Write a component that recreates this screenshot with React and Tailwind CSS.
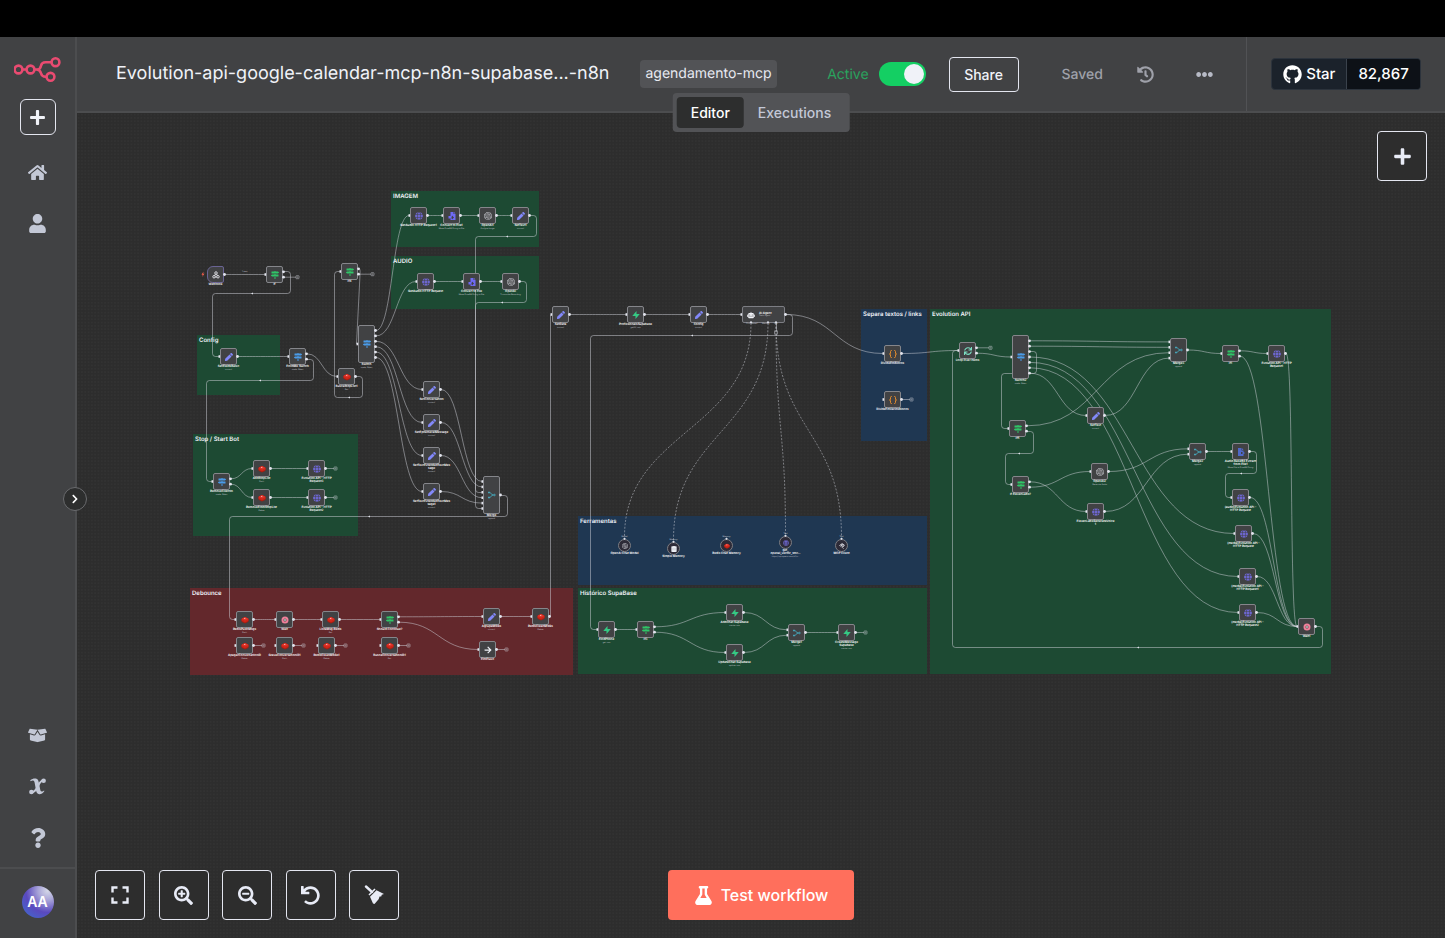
import { useState } from "react";
import {
  FaArrowRight, FaBoxOpen, FaChevronRight, FaEllipsisH, FaFlask, FaGithub, FaGlobe, FaHistory, FaHome,
  FaMapSigns, FaPen, FaPlus, FaQuestion, FaRobot, FaSearchMinus, FaSearchPlus, FaSync, FaUndo, FaUser,
} from "react-icons/fa";
import { SiOpenai } from "react-icons/si";

const NODE = 17;
const PORT_GAP = 5.4;

const STICKIES = [
  { title: "IMAGEM", x: 391, y: 191, w: 148, h: 56, color: "bg-[#1d4a33]" },
  { title: "AUDIO", x: 391, y: 256, w: 148, h: 53, color: "bg-[#1d4a33]" },
  { title: "Config", x: 197, y: 335, w: 83, h: 60, color: "bg-[#1d4a33]" },
  { title: "Stop / Start Bot", x: 193, y: 434, w: 165, h: 102, color: "bg-[#1d4a33]" },
  { title: "Debounce", x: 190, y: 588, w: 383, h: 87, color: "bg-[#63282c]" },
  { title: "Ferramentas", x: 578, y: 516, w: 349, h: 69, color: "bg-[#1f3752]" },
  { title: "Histórico SupaBase", x: 578, y: 588, w: 349, h: 86, color: "bg-[#1d4a33]" },
  { title: "Separa textos / links", x: 861, y: 309, w: 66, h: 132, color: "bg-[#1f3752]" },
  { title: "Evolution API", x: 930, y: 309, w: 401, h: 365, color: "bg-[#1d4a33]" },
];

// x / y are the top left corner of the node on the canvas
const NODES = {
  webhook: { x: 207, y: 266, icon: "webhook", label: "Webhook", ins: 0 },
  if: { x: 266, y: 266, icon: "if", label: "If", outs: 2, plus: 1 },
  if1: { x: 341, y: 263, icon: "if", label: "If4", outs: 2, plus: 1 },
  switch: { x: 358, y: 325, h: 38, icon: "switch", label: "Switch", sub: "mode: Rules", outs: 6 },
  setFields: { x: 220, y: 348, icon: "set", label: "SetFieldsBasic", sub: "manual" },
  fromMe: { x: 289, y: 348, icon: "switch", label: "FromMe Switch", sub: "mode: Rules", outs: 2 },
  stopList: { x: 338, y: 368, icon: "redis", label: "BuscaStopList1", sub: "Get" },

  imgHttp: { x: 410, y: 207, icon: "http", label: "GetAudio HTTP Request1" },
  imgFile: { x: 443, y: 207, icon: "file", label: "Convert to File1", sub: "Move Base64 String to File" },
  imgAi: { x: 479, y: 207, icon: "openai", label: "OpenAI1", sub: "Analyze Image" },
  imgSet: { x: 512, y: 207, icon: "set", label: "SetText1", sub: "manual" },
  audHttp: { x: 417, y: 273, icon: "http", label: "GetAudio HTTP Request" },
  audFile: { x: 463, y: 273, icon: "file", label: "Convert to File", sub: "Move Base64 String to File" },
  audAi: { x: 502, y: 273, icon: "openai", label: "OpenAI", sub: "Transcribe Recording" },

  setConv: { x: 423, y: 381, icon: "set", label: "SetConversation", sub: "manual" },
  setEph: { x: 423, y: 414, icon: "set", label: "SetEphemeralMessage", sub: "manual" },
  setExt: { x: 423, y: 447, icon: "set", label: "SetTextExtendedTextMes\nsage", sub: "manual" },
  setExt1: { x: 423, y: 483, icon: "set", label: "SetTextExtendedTextMes\nsage1", sub: "manual" },
  merge: { x: 483, y: 476, h: 38, icon: "merge", label: "Merge", sub: "append", ins: 6 },

  remove: { x: 213, y: 473, icon: "switch", label: "RemoveClientIn", sub: "mode: Rules", outs: 2 },
  addStop: { x: 253, y: 460, icon: "redis", label: "AddStopList", sub: "Push" },
  remStop: { x: 253, y: 489, icon: "redis", label: "RemoveFromStopList", sub: "Delete" },
  evoHttp3: { x: 308, y: 460, icon: "http", label: "Evolution API - HTTP\nRequest3", plus: 0 },
  evoHttp2: { x: 308, y: 489, icon: "http", label: "Evolution API - HTTP\nRequest2", plus: 0 },

  push: { x: 236, y: 611, icon: "redis", label: "RedisPushMsgs", sub: "Push" },
  wait: { x: 276, y: 611, icon: "wait", label: "Wait" },
  lista: { x: 322, y: 611, icon: "redis", label: "ListaMsg Redis", sub: "Get" },
  should: { x: 381, y: 611, icon: "if", label: "Should Continue?", outs: 2 },
  agrupa: { x: 483, y: 608, icon: "set", label: "AgrupaMSGs", sub: "manual" },
  clean: { x: 532, y: 608, icon: "redis", label: "RedisCleanMSGs", sub: "Delete" },
  apagar: { x: 236, y: 637, icon: "redis", label: "ApagarConversationID", sub: "Delete", plus: 0 },
  grava: { x: 276, y: 637, icon: "redis", label: "GravaConversationID1", sub: "Push", plus: 0 },
  clean1: { x: 318, y: 637, icon: "redis", label: "RedisCleanMSGs1", sub: "Delete", plus: 0 },
  busca: { x: 381, y: 637, icon: "redis", label: "BuscaConversationID1", sub: "Get", plus: 0 },
  noop: { x: 479, y: 641, icon: "arrow", label: "FimFluxo", plus: 0 },

  setData: { x: 552, y: 306, icon: "set", label: "SetData", sub: "manual" },
  profis: { x: 627, y: 306, icon: "supabase", label: "ProfissionaisSupabase", sub: "getAll: row" },
  config: { x: 690, y: 306, icon: "set", label: "Config", sub: "manual" },
  agent: { x: 742, y: 306, w: 43, icon: "agent" },
  divide: { x: 884, y: 345, icon: "code", label: "DivideEmBlocos" },
  divide2: { x: 884, y: 391, icon: "code", label: "DivideEmVariosBlocos", plus: 0 },

  find: { x: 598, y: 621, icon: "supabase", label: "FindPhone", sub: "get: row" },
  if3: { x: 637, y: 621, icon: "if", label: "If3", outs: 2 },
  addChat: { x: 726, y: 604, icon: "supabase", label: "AddChat Supabase", sub: "create: row" },
  updChat: { x: 726, y: 644, icon: "supabase", label: "UpdateChat Supabase", sub: "update: row" },
  merge1: { x: 788, y: 624, icon: "merge", label: "Merge1", sub: "append", ins: 2 },
  create: { x: 838, y: 624, icon: "supabase", label: "CreateMessage\nSupabase", sub: "create: row", plus: 0 },

  loop: { x: 959, y: 342, icon: "loop", label: "Loop Over Items", outs: 2, plus: 0 },
  switch2: { x: 1012, y: 335, h: 44, icon: "switch", label: "Switch2", sub: "mode: Rules", outs: 7 },
  if5: { x: 1009, y: 420, icon: "if", label: "If5", outs: 2 },
  ifEleven: { x: 1012, y: 476, icon: "if", label: "If ElevenLabs?", outs: 2 },
  setText: { x: 1087, y: 407, icon: "set", label: "SetText", sub: "manual" },
  openai2: { x: 1091, y: 463, icon: "openai", label: "OpenAI2", sub: "Generate Audio" },
  eleven: { x: 1087, y: 503, icon: "http", label: "ElevenLabsGenerateVoice\n1" },
  merge3: { x: 1170, y: 338, h: 24, icon: "merge", label: "Merge3", sub: "append", ins: 4 },
  merge2: { x: 1189, y: 443, icon: "merge", label: "Merge2", sub: "append", ins: 2 },
  audioEx: { x: 1232, y: 443, icon: "extract", label: "Audio Base64 Extract\nfrom File1", sub: "Move File to Base64 String" },
  sendAudio: { x: 1232, y: 489, icon: "http", label: "(audio)Evolution API -\nHTTP Request" },
  media1: { x: 1235, y: 525, icon: "http", label: "(media)Evolution API -\nHTTP Request" },
  media2: { x: 1239, y: 568, icon: "http", label: "(media)Evolution API -\nHTTP Request1" },
  media3: { x: 1239, y: 604, icon: "http", label: "(media)Evolution API -\nHTTP Request2" },
  if6: { x: 1222, y: 345, icon: "if", label: "If1", outs: 2 },
  evoHttp: { x: 1268, y: 345, icon: "http", label: "Evolution API - HTTP\nRequest1" },
  wait1: { x: 1298, y: 618, icon: "wait", label: "Wait1" },
};

// [source, source port, target, target port]
const EDGES = [
  ["webhook", 0, "if", 0], ["setFields", 0, "fromMe", 0], ["fromMe", 0, "stopList", 0],
  ["switch", 0, "imgHttp", 0], ["switch", 1, "audHttp", 0], ["switch", 2, "setConv", 0],
  ["switch", 3, "setEph", 0], ["switch", 4, "setExt", 0], ["switch", 5, "setExt1", 0],
  ["imgHttp", 0, "imgFile", 0], ["imgFile", 0, "imgAi", 0], ["imgAi", 0, "imgSet", 0],
  ["audHttp", 0, "audFile", 0], ["audFile", 0, "audAi", 0],
  ["setConv", 0, "merge", 0], ["setEph", 0, "merge", 1], ["setExt", 0, "merge", 3], ["setExt1", 0, "merge", 4],
  ["remove", 0, "addStop", 0], ["remove", 1, "remStop", 0],
  ["addStop", 0, "evoHttp3", 0], ["remStop", 0, "evoHttp2", 0],
  ["push", 0, "wait", 0], ["wait", 0, "lista", 0], ["lista", 0, "should", 0],
  ["should", 0, "agrupa", 0], ["should", 1, "noop", 0], ["agrupa", 0, "clean", 0],
  ["setData", 0, "profis", 0], ["profis", 0, "config", 0], ["config", 0, "agent", 0],
  ["agent", 0, "divide", 0], ["divide", 0, "loop", 0],
  ["find", 0, "if3", 0], ["if3", 0, "addChat", 0], ["if3", 1, "updChat", 0],
  ["addChat", 0, "merge1", 0], ["updChat", 0, "merge1", 1], ["merge1", 0, "create", 0],
  ["loop", 1, "switch2", 0], ["switch2", 0, "merge3", 0], ["switch2", 1, "merge3", 1],
  ["switch2", 3, "media1", 0], ["switch2", 4, "media2", 0], ["switch2", 5, "media3", 0], ["switch2", 6, "setText", 0],
  ["if5", 0, "merge3", 2], ["setText", 0, "merge3", 3], ["merge3", 0, "if6", 0], ["if6", 0, "evoHttp", 0],
  ["ifEleven", 0, "eleven", 0], ["ifEleven", 1, "openai2", 0],
  ["openai2", 0, "merge2", 0], ["eleven", 0, "merge2", 1], ["merge2", 0, "audioEx", 0],
  ["if6", 1, "wait1", 0], ["evoHttp", 0, "wait1", 0], ["sendAudio", 0, "wait1", 0],
  ["media1", 0, "wait1", 0], ["media2", 0, "wait1", 0], ["media3", 0, "wait1", 0],
];

// connections that run back to an earlier node
const LOOPS = [
  [[283, 271], [290, 271], [290, 293], [212, 293], [212, 356], [220, 356]],
  [[306, 359], [313, 359], [313, 380], [206, 380], [206, 481], [213, 481]],
  [[355, 376], [362, 376], [362, 397], [334, 397], [334, 271], [341, 271]],
  [[529, 215], [536, 215], [536, 236], [475, 236], [475, 492], [483, 492]],
  [[519, 281], [526, 281], [526, 302], [475, 302], [475, 508], [483, 508]],
  [[500, 495], [507, 495], [507, 516], [229, 516], [229, 619], [236, 619]],
  [[549, 616], [550, 616], [550, 314], [552, 314]],
  [[785, 314], [792, 314], [792, 335], [590, 335], [590, 629], [598, 629]],
  [[1029, 351], [1036, 351], [1036, 373], [1001, 373], [1001, 428], [1009, 428]],
  [[1026, 431], [1033, 431], [1033, 453], [1005, 453], [1005, 484], [1012, 484]],
  [[1249, 451], [1256, 451], [1256, 473], [1225, 473], [1225, 497], [1232, 497]],
  [[1315, 626], [1322, 626], [1322, 647], [952, 647], [952, 350], [959, 350]],
];

const ARROWS = [
  [252, 293], [260, 380], [349, 397], [507, 236], [502, 302], [369, 516], [692, 335], [1019, 453], [1241, 473], [1138, 647],
];

const TOOLS = [
  { x: 618, y: 539, icon: "openai", label: "OpenAI Chat Model", port: "Model", from: 751 },
  { x: 667, y: 542, icon: "memory", label: "Simple Memory", port: "Memory", from: 768 },
  { x: 720, y: 539, icon: "redis", label: "Redis Chat Memory", port: "Memory" },
  { x: 779, y: 536, icon: "http", label: "get_\nopenai_vector_stor...", sub: "https://api.openai.com/v1/v...", port: "Tool", from: 776 },
  { x: 835, y: 539, icon: "mcp", label: "MCP Client", port: "Tool", from: 776 },
];

const portY = (node, i, count) => node.y + (node.h || NODE) / 2 + (i - (count - 1) / 2) * PORT_GAP;
const inPort = (node, i) => [node.x - 1, portY(node, i, node.ins ?? 1)];
const outPort = (node, i) => [node.x + (node.w || NODE) + 1, portY(node, i, node.outs ?? 1)];

function curve([x1, y1], [x2, y2]) {
  const dx = Math.max(Math.abs(x2 - x1) / 2, 8);
  return `M${x1} ${y1}C${x1 + dx} ${y1} ${x2 - dx} ${y2} ${x2} ${y2}`;
}

function elbow(points) {
  let d = `M${points[0]}`;
  for (let i = 1; i < points.length - 1; i++) {
    const [px, py] = points[i - 1];
    const [x, y] = points[i];
    const [nx, ny] = points[i + 1];
    const r = Math.min(3, Math.hypot(x - px, y - py) / 2, Math.hypot(nx - x, ny - y) / 2);
    d += `L${x - Math.sign(x - px) * r} ${y - Math.sign(y - py) * r}`;
    d += `Q${x} ${y} ${x + Math.sign(nx - x) * r} ${y + Math.sign(ny - y) * r}`;
  }
  return `${d}L${points[points.length - 1]}`;
}

export default function App() {
  return (
    <div className="flex min-h-screen flex-col bg-black font-[Inter,sans-serif] text-[#f0f2f8] [text-rendering:geometricPrecision]">
      <div className="h-[37px]" />
      <div className="flex flex-1">
        <Sidebar />
        <div className="flex min-w-0 flex-1 flex-col">
          <Header />
          <Canvas />
        </div>
      </div>
    </div>
  );
}

function Sidebar() {
  return (
    <aside className="relative flex w-[77px] shrink-0 flex-col items-center border-r-2 border-[#4c4d4f] bg-[#414244] text-[#c3c8d6]">
      <a href="#home" aria-label="n8n" className="mt-5">
        <Logo />
      </a>
      <button
        aria-label="Create"
        className="mt-4 mb-3 flex size-9 items-center justify-center rounded-md border border-[#e4e6f0] text-[#f0f2f8]"
      >
        <FaPlus size={17} />
      </button>
      <SideLink name="Home"><FaHome size={19} /></SideLink>
      <SideLink name="Personal"><FaUser size={19} /></SideLink>
      <div className="flex-1" />
      <SideLink name="Templates"><FaBoxOpen size={19} /></SideLink>
      <SideLink name="Variables"><VariableIcon /></SideLink>
      <SideLink name="Help"><FaQuestion size={20} /></SideLink>
      <div className="mt-1 flex h-[71px] w-full items-center justify-center border-t-2 border-[#4c4d4f] pb-1">
        <button className="size-8 rounded-full bg-[radial-gradient(circle_at_80%_15%,#d5d8e8_0%,#a9a5d8_25%,#5a49bf_58%,#3b6fd0_100%)] text-sm font-semibold text-white">
          AA
        </button>
      </div>
      <button
        aria-label="Expand menu"
        className="absolute top-[450px] -right-3 z-20 flex size-6 items-center justify-center rounded-full border border-[#6a6b6e] bg-[#2d2e2e] text-white"
      >
        <FaChevronRight size={10} />
      </button>
    </aside>
  );
}

function SideLink({ name, children }) {
  return (
    <a href="#menu" aria-label={name} className="flex h-[51px] items-center justify-center">
      {children}
    </a>
  );
}

function Header() {
  const [active, setActive] = useState(true);
  const [tab, setTab] = useState("Editor");

  return (
    <header className="relative z-10 flex h-[76px] items-center border-b-2 border-[#4c4d4f] bg-[#414244] pl-[39px]">
      <h1 className="text-lg whitespace-nowrap">Evolution-api-google-calendar-mcp-n8n-supabase...-n8n</h1>
      <a href="#tag" className="ml-[31px] rounded bg-[#525356] px-[5px] py-1 text-[14px] leading-5 text-[#e8eaf2]">
        agendamento-mcp
      </a>
      <div className="ml-auto flex items-center">
        <label className="flex items-center gap-[10px] text-[14px] text-[#2aa35e]">
          Active
          <input
            type="checkbox"
            role="switch"
            checked={active}
            onChange={(e) => setActive(e.target.checked)}
            className="relative h-6 w-[47px] appearance-none rounded-full bg-[#77787b] before:absolute before:top-[2px] before:left-[2px] before:size-5 before:rounded-full before:bg-[#f0f2f8] checked:bg-[#14cf63] checked:before:left-[25px]"
          />
        </label>
        <button className="ml-[23px] h-[35px] w-[70px] rounded-sm border border-[#e4e6f0] text-[14px] font-medium">
          Share
        </button>
        <span className="ml-[43px] text-[14px] font-medium text-[#9fa1aa]">Saved</span>
        <button aria-label="Workflow history" className="ml-[34px] text-[#9fa1aa]"><FaHistory size={17} /></button>
        <button aria-label="More" className="ml-[42px] text-[#b7bac6]"><FaEllipsisH size={17} /></button>
      </div>
      <div className="ml-[33px] flex h-full w-[199px] items-center justify-center border-l border-[#515255]">
        <a
          href="#github"
          className="flex h-8 overflow-hidden rounded-sm border border-[#2c333c] bg-[#1b222b] text-[15px] leading-[30px] font-medium text-white"
        >
          <span className="flex items-center gap-1 px-[11px]"><FaGithub size={19} />Star</span>
          <span className="border-l border-[#3a424c] bg-[#0d1117] px-[11px]">82,867</span>
        </a>
      </div>
      <div className="absolute top-14 left-1/2 flex -translate-x-1/2 rounded-sm bg-[#525356] p-1 text-[14px] font-medium">
        {["Editor", "Executions"].map((t) => (
          <button
            key={t}
            onClick={() => setTab(t)}
            className={`h-[31px] rounded-sm px-[14px] ${tab === t ? "bg-[#2d2e2e] text-white" : "text-[#c3c8d6]"}`}
          >
            {t}
          </button>
        ))}
      </div>
    </header>
  );
}

function Canvas() {
  return (
    <main className="relative flex flex-1 flex-col justify-between overflow-hidden bg-[#2d2d2d]">
      <svg className="absolute inset-0 size-full">
        <defs>
          <pattern id="dots" width="10" height="10" patternUnits="userSpaceOnUse" patternTransform="scale(0.33)">
            <circle cx="5" cy="5" r="2" fill="#373737" />
          </pattern>
        </defs>
        <rect width="100%" height="100%" fill="url(#dots)" />
      </svg>
      <Diagram />
      <div className="relative flex justify-end px-[18px] pt-[18px]">
        <ToolButton name="Add node"><FaPlus size={19} /></ToolButton>
      </div>
      <div className="relative grid grid-cols-[1fr_auto_1fr] items-center px-[18px] pb-[18px]">
        <div className="flex w-[304px] justify-between">
          <ToolButton name="Zoom to fit"><FitIcon /></ToolButton>
          <ToolButton name="Zoom in"><FaSearchPlus size={19} /></ToolButton>
          <ToolButton name="Zoom out"><FaSearchMinus size={19} /></ToolButton>
          <ToolButton name="Reset zoom"><FaUndo size={19} /></ToolButton>
          <ToolButton name="Tidy up"><BroomIcon /></ToolButton>
        </div>
        <button className="flex h-[50px] w-[186px] items-center justify-center gap-2 rounded-sm bg-[#ff6f5c] text-[16px] font-medium text-white">
          <FaFlask size={19} />
          Test workflow
        </button>
      </div>
    </main>
  );
}

function ToolButton({ name, children }) {
  return (
    <button
      aria-label={name}
      className="flex size-[50px] items-center justify-center rounded-sm border border-[#e4e6f0] bg-[#2d2d2d] text-[#e8ebf6]"
    >
      {children}
    </button>
  );
}

function Diagram() {
  const nodes = Object.values(NODES);

  return (
    <div className="absolute -top-[113px] -left-[77px]">
      {STICKIES.map((s) => (
        <section
          key={s.title}
          className={`absolute pt-[2px] pl-[2px] ${s.color}`}
          style={{ left: s.x, top: s.y, width: s.w, height: s.h }}
        >
          <h2 className="text-[6px] leading-[8px] font-semibold whitespace-nowrap">{s.title}</h2>
        </section>
      ))}

      <svg className="absolute overflow-visible" width="1" height="1" fill="none" stroke="#ced0d8" strokeOpacity="0.5">
        {EDGES.map(([from, o, to, i]) => (
          <path key={`${from}${o}${to}${i}`} d={curve(outPort(NODES[from], o), inPort(NODES[to], i))} />
        ))}
        {LOOPS.map((points) => (
          <path key={points.join()} d={elbow(points)} transform="translate(.5 .5)" />
        ))}
        <path d="M359 268.500Q360.500 268.500 360 275L356.500 344" />
        {TOOLS.filter((t) => t.from).map((t) => {
          const x = t.x + 6.5;
          const mid = (323 + t.y) / 2;
          return (
            <path
              key={t.label}
              strokeDasharray="2 1.5"
              d={`M${t.from} 323C${t.from} ${mid} ${x} ${mid} ${x} ${t.y - 2}`}
            />
          );
        })}
        {nodes.filter((n) => n.plus !== undefined).map((n) => {
          const [x, y] = outPort(n, n.plus);
          const len = n.outs ? 12 : 8;
          return (
            <g key={n.label}>
              <path d={`M${x} ${y}h${len}`} />
              <rect x={x + len} y={y - 1.5} width="3" height="3" rx="0.5" />
              <path d={`M${x + len + 0.5} ${y}h2m-1 -1v2`} strokeWidth="0.5" />
            </g>
          );
        })}
        <path d="M776.500 322v9" />
        <rect x="774.500" y="331" width="3" height="3" />
      </svg>

      <span className="absolute top-[271px] left-[242px] text-[2px] leading-[2px] whitespace-nowrap text-[#d5d7df]">1 item</span>

      {nodes.map((n) => (
        <Node key={n.icon + n.x + n.y} node={n} />
      ))}
      {TOOLS.map((t) => (
        <div
          key={t.label}
          className="absolute flex size-[13px] items-center justify-center rounded-full border border-[#7c7d83] bg-[#2d2b38]"
          style={{ left: t.x, top: t.y }}
        >
          <NodeIcon name={t.icon} size={6} />
          <span className="absolute bottom-full mb-[2px] text-[2px] leading-[2px] text-[#d5d7df]">{t.port}</span>
          <Caption label={t.label} sub={t.sub} />
        </div>
      ))}

      <svg className="absolute overflow-visible" width="1" height="1" fill="#e3e5ee">
        {nodes.map((n) => (
          <g key={n.icon + n.x + n.y}>
            {Array.from({ length: n.ins ?? 1 }, (_, i) => {
              const [x, y] = inPort(n, i);
              return <rect key={i} x={x - 0.5} y={y - 1.3} width="1.600" height="2.600" />;
            })}
            {Array.from({ length: n.outs ?? 1 }, (_, i) => {
              const [x, y] = outPort(n, i);
              return <circle key={i} cx={x - 0.5} cy={y} r="1.400" />;
            })}
          </g>
        ))}
        {ARROWS.map(([x, y]) => (
          <path key={`${x}-${y}`} d={`M${x + 1} ${y - 0.6}v2.200l-2 -1.100z`} />
        ))}
        {TOOLS.map((t) => (
          <path key={t.label} d={`M${t.x + 6.5} ${t.y - 1.5}l1.300 1.300l-1.300 1.300l-1.300 -1.300z`} />
        ))}
        {[751, 768, 776].map((x) => (
          <path key={x} d={`M${x} 321l1.300 1.300l-1.300 1.300l-1.300 -1.300z`} />
        ))}
        <path d="M203.500 271.500l-2 3.200h1.300l-.6 2.300l2.200-3.300h-1.300z" fill="#ff5f4c" />
      </svg>
    </div>
  );
}

function Node({ node }) {
  if (node.icon === "agent") {
    return (
      <div
        className="absolute flex items-center gap-1 rounded-xs border border-[#7c7d83] bg-[#414244] pl-1"
        style={{ left: node.x, top: node.y, width: node.w, height: NODE }}
      >
        <NodeIcon name="agent" size={8} />
        <div>
          <p className="text-[3px] leading-[4px] font-semibold text-white">AI Agent</p>
          <p className="text-[2px] leading-[3px] text-[#c9cbd3]">Tools Agent</p>
        </div>
        <div className="absolute top-full left-[3px] flex gap-1 pt-px text-[2px] leading-[3px] whitespace-nowrap text-[#c9cbd3]">
          <span>Chat Model*</span>
          <span>Memory</span>
          <span>Tool</span>
        </div>
      </div>
    );
  }
  return (
    <div
      className={`absolute flex items-center justify-center border bg-[#414244] ${
        node.icon === "webhook" ? "rounded-l-md rounded-r-xs border-[#6a6494]" : "rounded-xs border-[#85868b]"
      }`}
      style={{ left: node.x, top: node.y, width: NODE, height: node.h || NODE }}
    >
      <NodeIcon name={node.icon} size={8} />
      <Caption label={node.label} sub={node.sub} />
    </div>
  );
}

function Caption({ label, sub }) {
  return (
    <div className="absolute top-full left-1/2 -translate-x-1/2 pt-px text-center whitespace-pre">
      <p className="text-[3px] leading-[3px] font-semibold text-white">{label}</p>
      {sub && <p className="pt-px text-[2px] leading-[3px] text-[#c9cbd3]">{sub}</p>}
    </div>
  );
}

function NodeIcon({ name, size }) {
  switch (name) {
    case "if":
      return <FaMapSigns size={size} color="#2fc567" />;
    case "switch":
      return <FaMapSigns size={size} color="#4a9be8" />;
    case "set":
      return <FaPen size={size} color="#8288fa" />;
    case "http":
      return <FaGlobe size={size} color="#6d66cf" />;
    case "openai":
      return <SiOpenai size={size} color="#c9cad0" />;
    case "loop":
      return <FaSync size={size} color="#7be0c3" />;
    case "agent":
      return <FaRobot size={size} color="#f0f2f8" />;
    case "arrow":
      return <FaArrowRight size={size} color="#f0f2f8" />;
    case "webhook":
      return (
        <svg width={size} height={size} viewBox="0 0 16 16" fill="none" stroke="#d8d9de" strokeWidth="2">
          <circle cx="8" cy="4" r="2.500" />
          <circle cx="4" cy="11.500" r="2.500" />
          <circle cx="12" cy="11.500" r="2.500" />
          <path d="M7 6L5 10M9 6l2 4M6 12h4" />
        </svg>
      );
    case "file":
      return (
        <svg width={size} height={size} viewBox="0 0 16 16" fill="#6f6af5">
          <path d="M5 0h6v4h4v12H5v-3h3v2l4-4-4-4v2H5z" />
          <path d="M12 0l3 3h-3zM1 8h6v5H1z" />
        </svg>
      );
    case "extract":
      return (
        <svg width={size} height={size} viewBox="0 0 16 16" fill="#4f68c8">
          <path d="M2 0h7v5h4v3H8v4h5v4H2z" />
          <path d="M10 0l3 4h-3zM10 9h2V7l4 3-4 3v-2h-2z" />
        </svg>
      );
    case "redis":
      return (
        <svg width={size} height={size} viewBox="0 0 16 16">
          <path d="M1 6q0-1 7-4 7 3 7 4v5q0 1-7 4-7-3-7-4z" fill="#a41e11" />
          <path d="M1 6q0-1 7-4 7 3 7 4v3q0 1-7 4-7-3-7-4z" fill="#cf2519" />
          <path d="M1 6l7-4 7 4-7 3z" fill="#e0352b" />
          <path d="M6 5l2-1 1 1-2 1z" fill="#fff" />
        </svg>
      );
    case "supabase":
      return (
        <svg width={size} height={size} viewBox="0 0 16 16" fill="#35c984">
          <path d="M9 0v6h6.500L7 16v-6H.5z" />
        </svg>
      );
    case "code":
      return (
        <svg width={size} height={size} viewBox="0 0 16 16" fill="none" stroke="#e08a2e" strokeWidth="2">
          <path d="M6 1H5Q3 1 3 3v3Q3 8 1 8q2 0 2 2v3q0 2 2 2h1M10 1h1q2 0 2 2v3q0 2 2 2-2 0-2 2v3q0 2-2 2h-1" />
        </svg>
      );
    case "merge":
      return (
        <svg width={size} height={size} viewBox="0 0 16 16" fill="none" stroke="#45a3b5" strokeWidth="2">
          <path d="M0 3h3c4 0 3 5 7 5h2M0 13h3c4 0 3-5 7-5" />
          <circle cx="13" cy="8" r="1.500" />
          <path d="M1 2h2v2H1zM1 12h2v2H1z" />
        </svg>
      );
    case "wait":
      return (
        <svg width={size} height={size} viewBox="0 0 16 16">
          <circle cx="8" cy="8" r="5" fill="none" stroke="#f0809a" strokeWidth="4" />
          <path d="M8 6v4" stroke="#fff" strokeWidth="2" />
        </svg>
      );
    case "memory":
      return (
        <svg width={size} height={size} viewBox="0 0 16 16" fill="#f0f2f8">
          <path d="M1 1q7-2 14 0v14q-7 2-14 0z" />
          <path d="M1 6h14M1 10h14" stroke="#9a9ba1" />
        </svg>
      );
    case "mcp":
      return (
        <svg width={size} height={size} viewBox="0 0 16 16" fill="none" stroke="#f0f2f8" strokeWidth="2">
          <path d="M1 8l6-6q3-1 3 2L5 9M5 9l5-5q4-1 4 3l-5 5 3 3M4 6l4-4M7 11l5-5" />
        </svg>
      );
    default:
      return null;
  }
}

function Logo() {
  return (
    <svg width="48" height="26" viewBox="0 0 48 26" fill="none" stroke="#ea4b71" strokeWidth="2.600">
      <circle cx="4.500" cy="12.500" r="3.900" />
      <circle cx="16.500" cy="12.500" r="3.900" />
      <circle cx="41.500" cy="5.200" r="3.900" />
      <circle cx="36.500" cy="19.800" r="3.900" />
      <path d="M8.400 12.500h4.200M20.400 12.500h2.600c3 0 3.600-1.800 4-3.800s1.400-3.500 4.500-3.500h6M22.500 12.500c3 0 4 1.800 4.500 3.800s1.600 3.500 4.500 3.500h1.200" />
    </svg>
  );
}

function VariableIcon() {
  return (
    <svg width="17" height="17" viewBox="0 0 17 17" fill="currentColor">
      <path d="M1.200 2.200C3 .8 5 .4 6.800.6 8.800.9 9.300 2.200 9.700 4l1.500 7.600c.3 1.600.9 2 1.900 1.800.7-.1 1.300-.5 1.900-1l.4.5c-1.600 2.300-3.400 3.500-5.200 3.300-2-.2-2.700-1.500-3.100-3.400L5.600 4.600C5.300 3 4.700 2.300 3.700 2.500c-.8.100-1.400.4-2 .8z" />
      <path d="M14.500 2.500C11 2.500 10 6 8.700 8.700S6 14.300 2.500 14.300" fill="none" stroke="currentColor" strokeWidth="2" />
      <circle cx="14.600" cy="2.800" r="2.300" />
      <circle cx="2.400" cy="14" r="2.300" />
    </svg>
  );
}

function FitIcon() {
  return (
    <svg width="18" height="18" viewBox="0 0 18 18" fill="none" stroke="currentColor" strokeWidth="2.400">
      <path d="M1.500 6.500v-5h5M11.500 1.500h5v5M16.500 11.500v5h-5M6.500 16.500h-5v-5" />
    </svg>
  );
}

function BroomIcon() {
  return (
    <svg width="20" height="20" viewBox="0 0 20 20" fill="currentColor">
      <path d="M2 1.500l6 5.500" stroke="currentColor" strokeWidth="2.400" strokeLinecap="round" />
      <path d="M11 4L5 10" stroke="currentColor" strokeWidth="1.600" />
      <path d="M12.500 5.200L20 9l-2.200.8-.6 1.800-1.600-.1-1 2.800L10.500 19 9 18.500l-3-6.800z" />
    </svg>
  );
}
